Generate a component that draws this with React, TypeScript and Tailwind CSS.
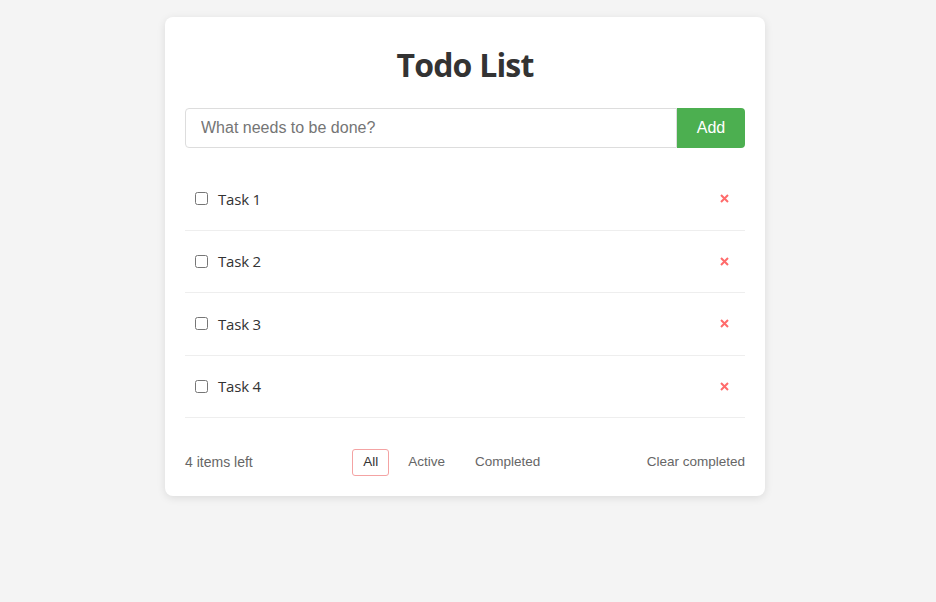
import { useState } from "react";

interface ITodo {
  id: number;
  text: string;
  done: boolean;
}

const initialTodos: ITodo[] = [
  { id: 1, text: "Task 1", done: false },
  { id: 2, text: "Task 2", done: false },
  { id: 3, text: "Task 3", done: false },
  { id: 4, text: "Task 4", done: false },
];

const filters = ["All", "Active", "Completed"];

const App = () => {
  const [todos, setTodos] = useState<ITodo[]>(initialTodos);
  const [filter, setFilter] = useState("All");
  const [value, setValue] = useState("");

  const left = todos.filter((t) => !t.done).length;
  const shown = todos.filter((t) =>
    filter === "Active" ? !t.done : filter === "Completed" ? t.done : true
  );

  const handleAdd = () => {
    if (!value.trim()) return;
    setTodos([...todos, { id: Date.now(), text: value.trim(), done: false }]);
    setValue("");
  };

  return (
    <div className="min-h-[602px] bg-[#f4f4f4] pt-[17px] pr-[6px] font-['Liberation_Sans',Arial,sans-serif]">
      <div className="mx-auto w-[600px] rounded-lg bg-white p-5 shadow-[0_2px_8px_rgba(0,0,0,0.1)]">
        <h1 className="mt-2 mb-[23px] text-center font-['Open_Sans','Noto_Sans',sans-serif] text-[32px] leading-[40px] font-bold tracking-[-0.8px] text-[#333]">
          Todo List
        </h1>
        <div className="flex h-10">
          <input
            value={value}
            onChange={(e) => setValue(e.target.value)}
            placeholder="What needs to be done?"
            className="flex-1 rounded-l border border-[#ddd] px-[15px] text-base text-[#333] outline-none placeholder:text-[#757575]"
          />
          <button
            onClick={handleAdd}
            className="w-[68px] rounded-r bg-[#4caf50] text-base text-white"
          >
            Add
          </button>
        </div>
        <ul className="mt-5">
          {shown.map((todo) => (
            <li
              key={todo.id}
              className="flex h-[62.5px] items-center border-b border-[#eee] px-[10px]"
            >
              <input
                type="checkbox"
                checked={todo.done}
                onChange={() =>
                  setTodos(
                    todos.map((t) =>
                      t.id === todo.id ? { ...t, done: !t.done } : t
                    )
                  )
                }
                className="h-[13px] w-[13px]"
              />
              <span
                className={`ml-[10px] flex-1 font-['Open_Sans','Noto_Sans',sans-serif] text-[15px] tracking-[-0.2px] text-[#333] ${
                  todo.done ? "line-through text-[#aaa]" : ""
                }`}
              >
                {todo.text}
              </span>
              <button
                onClick={() => setTodos(todos.filter((t) => t.id !== todo.id))}
                className="mr-[3px] flex h-4 w-4 items-center justify-center text-[#ff6b6b]"
              >
                <svg width="9" height="9" viewBox="0 0 9 9">
                  <path
                    d="M1 1L8 8M8 1L1 8"
                    stroke="currentColor"
                    strokeWidth="2"
                  />
                </svg>
              </button>
            </li>
          ))}
        </ul>
        <div className="mt-[31px] flex items-center justify-between text-[14px] text-[#666]">
          <span>{left} items left</span>
          <div className="ml-[4px] flex gap-[8px] text-[13.5px]">
            {filters.map((f) => (
              <button
                key={f}
                onClick={() => setFilter(f)}
                className={`h-[27px] rounded-[3px] border px-[10px] ${
                  filter === f
                    ? "border-[#f4a3a3] text-[#333]"
                    : "border-transparent text-[#666]"
                }`}
              >
                {f}
              </button>
            ))}
          </div>
          <button
            className="text-[13.5px]"
            onClick={() => setTodos(todos.filter((t) => !t.done))}
          >
            Clear completed
          </button>
        </div>
      </div>
    </div>
  );
};

export default App;
